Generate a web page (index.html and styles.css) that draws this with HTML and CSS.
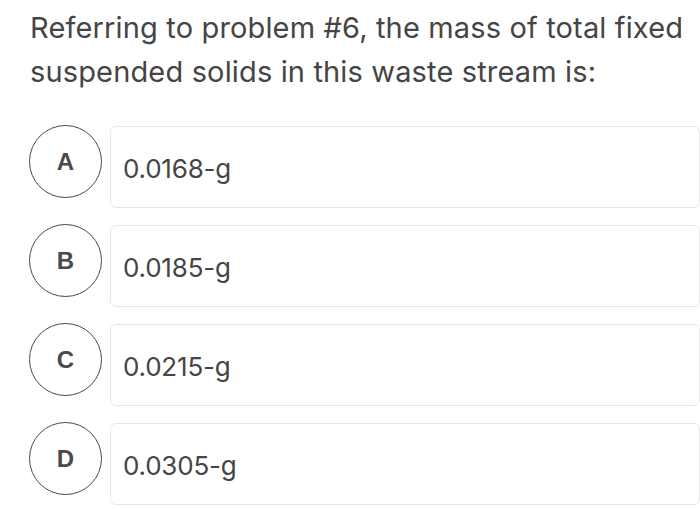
FILE: index.html
```html
<!DOCTYPE html>
<html>
<head>
<meta charset="utf-8">
<link rel="stylesheet" href="styles.css">
</head>
<body>
<div class="page">
  <p class="question">Referring to problem #6, the mass of total fixed suspended solids in this waste stream is:</p>
  <div class="options">
    <div class="option">
      <div class="letter">A</div>
      <div class="answer">0.0168-g</div>
    </div>
    <div class="option">
      <div class="letter">B</div>
      <div class="answer">0.0185-g</div>
    </div>
    <div class="option">
      <div class="letter">C</div>
      <div class="answer">0.0215-g</div>
    </div>
    <div class="option">
      <div class="letter">D</div>
      <div class="answer">0.0305-g</div>
    </div>
  </div>
</div>
</body>
</html>
```
FILE: styles.css
```css
html, body {
  margin: 0;
  padding: 0;
  background: #ffffff;
}
.page {
  width: 700px;
  height: 510px;
  overflow: hidden;
  font-family: Inter, "Noto Sans", sans-serif;
  color: #454545;
}
.question {
  margin: 0;
  padding: 6px 5px 0 30px;
  font-size: 29px;
  line-height: 44px;
  letter-spacing: 0.15px;
  height: 119px;
  box-sizing: border-box;
}
.options {
  display: flex;
  flex-direction: column;
  gap: 17px;
  padding-top: 7px;
}
.option {
  display: flex;
  align-items: flex-start;
  gap: 8px;
  padding-left: 29px;
}
.letter {
  flex: none;
  width: 73px;
  height: 73px;
  box-sizing: border-box;
  border: 1.5px solid #4a4a4a;
  border-radius: 50%;
  display: flex;
  align-items: center;
  justify-content: center;
  font-family: "Liberation Sans", Arial, sans-serif;
  font-size: 24px;
  font-weight: 700;
  color: #4a4a4a;
  margin-top: -1px;
}
.answer {
  flex: none;
  width: 590px;
  height: 82px;
  box-sizing: border-box;
  border: 1.5px solid #e4e9ef;
  border-radius: 6px;
  display: flex;
  align-items: center;
  padding-left: 12px;
  padding-top: 3px;
  font-size: 26px;
  letter-spacing: -0.2px;
  color: #454545;
}
```
